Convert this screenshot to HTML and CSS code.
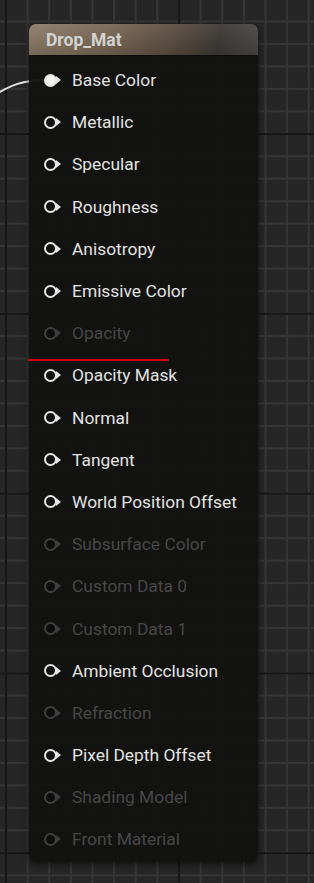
FILE: index.html
```html
<!DOCTYPE html>
<html lang="en">
<head>
    <meta charset="UTF-8">
    <meta name="viewport" content="width=device-width, initial-scale=1.0">
    <title>Drop_Mat</title>
    <link rel="stylesheet" href="styles.css">
</head>
<body>
    <div class="graph">
        <!-- провод к Base Color -->
        <svg class="wire" width="60" height="100" viewBox="0 0 60 100">
            <path d="M-2 93 C 10 86, 22 80, 46 80" fill="none" stroke="#e6e6e6" stroke-width="2"/>
        </svg>

        <div class="node">
            <div class="node-header">Drop_Mat</div>
            <div class="node-body">
                <div class="pin-row connected"><span class="pin"></span>Base Color</div>
                <div class="pin-row"><span class="pin"></span>Metallic</div>
                <div class="pin-row"><span class="pin"></span>Specular</div>
                <div class="pin-row"><span class="pin"></span>Roughness</div>
                <div class="pin-row"><span class="pin"></span>Anisotropy</div>
                <div class="pin-row"><span class="pin"></span>Emissive Color</div>
                <div class="pin-row disabled"><span class="pin"></span>Opacity</div>
                <div class="pin-row"><span class="pin"></span>Opacity Mask</div>
                <div class="pin-row"><span class="pin"></span>Normal</div>
                <div class="pin-row"><span class="pin"></span>Tangent</div>
                <div class="pin-row"><span class="pin"></span>World Position Offset</div>
                <div class="pin-row disabled"><span class="pin"></span>Subsurface Color</div>
                <div class="pin-row disabled"><span class="pin"></span>Custom Data 0</div>
                <div class="pin-row disabled"><span class="pin"></span>Custom Data 1</div>
                <div class="pin-row"><span class="pin"></span>Ambient Occlusion</div>
                <div class="pin-row disabled"><span class="pin"></span>Refraction</div>
                <div class="pin-row"><span class="pin"></span>Pixel Depth Offset</div>
                <div class="pin-row disabled"><span class="pin"></span>Shading Model</div>
                <div class="pin-row disabled"><span class="pin"></span>Front Material</div>
            </div>
        </div>

        <!-- красная линия-пометка -->
        <div class="mark-line"></div>
    </div>
</body>
</html>
```

FILE: styles.css
```css
body {
    margin: 0;
    overflow: hidden;
    font-family: Roboto, "Liberation Sans", sans-serif;
}

/* Сетка графа */
.graph {
    position: relative;
    width: 314px;
    height: 883px;
    padding: 24px 0 0 29px;
    box-sizing: border-box;
    background-color: #262626;
    background-image:
        linear-gradient(to right, #161616 2px, transparent 2px),
        linear-gradient(to bottom, #161616 2px, transparent 2px),
        linear-gradient(to right, #363636 2px, transparent 2px),
        linear-gradient(to bottom, #363636 2px, transparent 2px);
    background-size: 173.1px 179.8px, 173.1px 179.8px, 21.64px 22.47px, 21.64px 22.47px;
    background-position: 5px 133px, 5px 133px, 5px -2px, 5px -2px;
}

.wire {
    position: absolute;
    left: 0;
    top: 0;
}

.node {
    position: relative;
    width: 229px;
    height: 838px;
    border-radius: 7px;
    background: rgba(18, 18, 17, 0.96);
    box-shadow: 0 2px 6px rgba(0, 0, 0, 0.6);
    overflow: hidden;
}

.node-header {
    height: 31px;
    padding-left: 17px;
    display: flex;
    align-items: center;
    color: #d2d2d2;
    font-size: 17.5px;
    font-weight: 700;
    background:
        linear-gradient(to bottom, rgba(255, 255, 255, 0.05) 0%, rgba(0, 0, 0, 0.15) 100%),
        linear-gradient(100deg, #8f7d69 0%, #7a6855 35%, #5e4f42 62%, #3e3a36 82%, #4a4a48 100%);
    border-bottom: 1px solid #0d0d0d;
}

.node-body {
    padding-top: 3px;
}

.pin-row {
    height: 42.2px;
    display: flex;
    align-items: center;
    padding-left: 15px;
    color: #e2e2e2;
    font-size: 17.4px;
}

/* Пин: кружок со стрелкой */
.pin {
    position: relative;
    width: 9px;
    height: 9px;
    border: 2.5px solid #e6e6e6;
    border-radius: 50%;
    background: #111;
    margin-right: 15px;
    flex-shrink: 0;
}
.pin::after {
    content: "";
    position: absolute;
    left: 10px;
    top: 0.5px;
    border-left: 5px solid #e6e6e6;
    border-top: 4px solid transparent;
    border-bottom: 4px solid transparent;
}

.connected .pin {
    background: #f2f2f2;
}

.disabled {
    color: #474747;
}
.disabled .pin {
    border-color: #3e3e3e;
    background: #0c0c0c;
}
.disabled .pin::after {
    border-left-color: #3e3e3e;
}

.mark-line {
    position: absolute;
    left: 28px;
    top: 359px;
    width: 141px;
    height: 2px;
    background: #d80000;
}
```
